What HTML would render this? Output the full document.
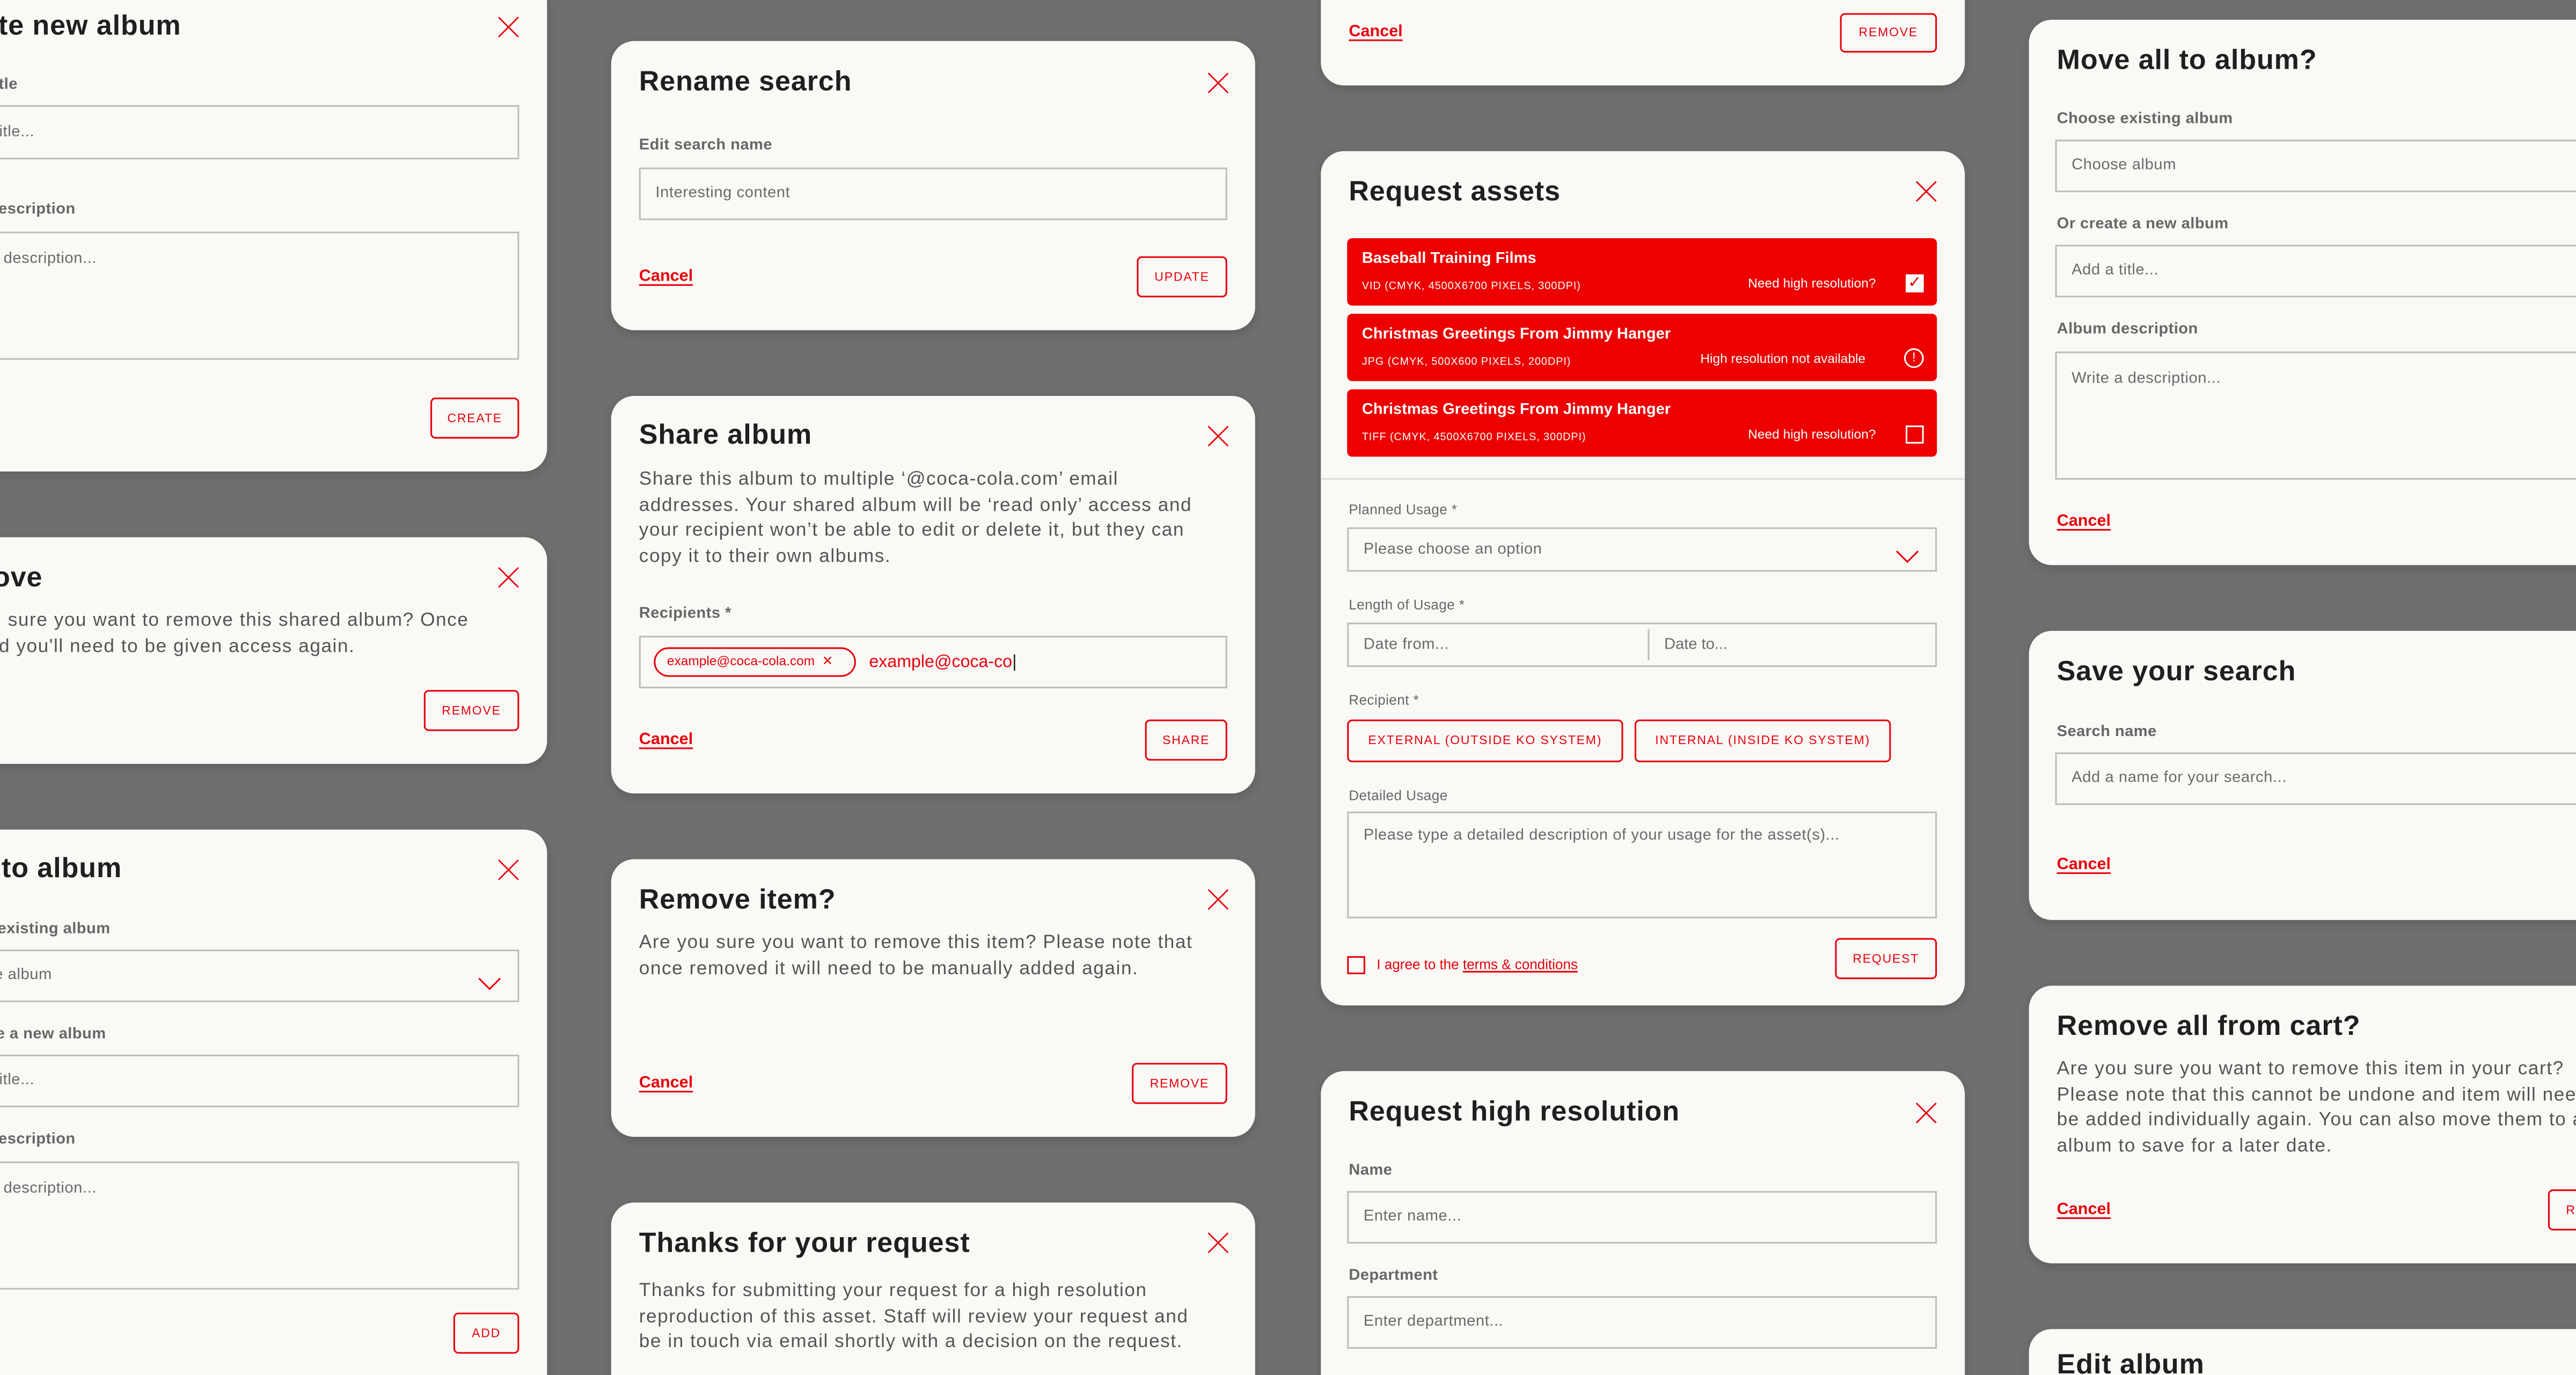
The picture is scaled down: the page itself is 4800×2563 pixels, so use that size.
<!DOCTYPE html>
<html><head><meta charset="utf-8">
<style>
html,body{margin:0;padding:0;}
body{width:4800px;height:2560px;overflow:hidden;background:#6f6f6f;}
#s{position:absolute;left:0;top:0;width:1568px;height:837px;transform:scale(3.0612,3.0622);transform-origin:0 0;font-family:"Liberation Sans",sans-serif;overflow:hidden;background:#6f6f6f;}
#s div{position:absolute;box-sizing:border-box;white-space:nowrap;}
.c{background:#faf9f6;border-radius:14px;box-shadow:0 2px 6px rgba(0,0,0,.15);}
.t{font-weight:700;font-size:17px;line-height:20px;color:#1f1f1f;letter-spacing:.3px;}
.l{font-weight:700;font-size:9.5px;line-height:12px;color:#666;letter-spacing:.15px;}
.i{border:1px solid #bdbdbd;font-size:9.5px;color:#6a6a6a;padding-left:9px;background:#faf9f6;letter-spacing:.2px;}
.b{border:1px solid #e8000b;border-radius:3px;color:#e8000b;font-size:7.5px;letter-spacing:.6px;text-align:center;}
.k{font-weight:700;font-size:10px;line-height:14px;color:#e8000b;text-decoration:underline;text-underline-offset:2px;}
.p{font-size:11.5px;line-height:15.6px;color:#555;letter-spacing:.5px;}
.r{background:#ec0000;border-radius:3px;color:#fff;}
</style></head><body><div id="s">

<!-- COLUMN 1 -->
<div class="c" style="left:-59px;top:-12px;width:392px;height:299px"></div>
<div class="t" style="left:-40px;top:6px">Create new album</div>
<div style="left:303px;top:10px"><svg width="13" height="13"><path d="M0.5 0.5L12.5 12.5M12.5 0.5L0.5 12.5" stroke="#e8000b" stroke-width="0.9"/></svg></div>
<div class="l" style="left:-40px;top:46px">Album title</div>
<div class="i" style="left:-42px;top:64px;width:358px;height:33px;line-height:31px">Add a title...</div>
<div class="l" style="left:-40px;top:122px">Album description</div>
<div class="i" style="left:-42px;top:141px;width:358px;height:78px;padding-top:10px">Write a description...</div>
<div class="b" style="left:262px;top:242px;width:54px;height:25px;line-height:23px">CREATE</div>

<div class="c" style="left:-59px;top:327px;width:392px;height:138px"></div>
<div class="t" style="left:-42px;top:342px">Remove</div>
<div style="left:303px;top:345px"><svg width="13" height="13"><path d="M0.5 0.5L12.5 12.5M12.5 0.5L0.5 12.5" stroke="#e8000b" stroke-width="0.9"/></svg></div>
<div class="p" style="left:-42px;top:371px">Are you sure you want to remove this shared album? Once<br>removed you'll need to be given access again.</div>
<div class="b" style="left:258px;top:420px;width:58px;height:25px;line-height:23px">REMOVE</div>

<div class="c" style="left:-59px;top:505px;width:392px;height:345px"></div>
<div class="t" style="left:-38px;top:519px">Add to album</div>
<div style="left:303px;top:523px"><svg width="13" height="13"><path d="M0.5 0.5L12.5 12.5M12.5 0.5L0.5 12.5" stroke="#e8000b" stroke-width="0.9"/></svg></div>
<div class="l" style="left:-40px;top:560px">Choose existing album</div>
<div class="i" style="left:-42px;top:578px;width:358px;height:32px;line-height:30px">Choose album</div>
<div style="left:291px;top:590px"><svg width="14" height="8"><path d="M0.5 0.5L7 7L13.5 0.5" stroke="#e8000b" stroke-width="1" fill="none"/></svg></div>
<div class="l" style="left:-40px;top:624px">Or create a new album</div>
<div class="i" style="left:-42px;top:642px;width:358px;height:32px;line-height:30px">Add a title...</div>
<div class="l" style="left:-40px;top:688px">Album description</div>
<div class="i" style="left:-42px;top:707px;width:358px;height:78px;padding-top:10px">Write a description...</div>
<div class="b" style="left:276px;top:799px;width:40px;height:25px;line-height:23px">ADD</div>

<!-- COLUMN 2 -->
<div class="c" style="left:372px;top:25px;width:392px;height:176px"></div>
<div class="t" style="left:389px;top:40px">Rename search</div>
<div style="left:735px;top:44px"><svg width="13" height="13"><path d="M0.5 0.5L12.5 12.5M12.5 0.5L0.5 12.5" stroke="#e8000b" stroke-width="0.9"/></svg></div>
<div class="l" style="left:389px;top:83px">Edit search name</div>
<div class="i" style="left:389px;top:102px;width:358px;height:32px;line-height:30px">Interesting content</div>
<div class="k" style="left:389px;top:162px">Cancel</div>
<div class="b" style="left:692px;top:156px;width:55px;height:25px;line-height:23px">UPDATE</div>

<div class="c" style="left:372px;top:241px;width:392px;height:242px"></div>
<div class="t" style="left:389px;top:255px">Share album</div>
<div style="left:735px;top:259px"><svg width="13" height="13"><path d="M0.5 0.5L12.5 12.5M12.5 0.5L0.5 12.5" stroke="#e8000b" stroke-width="0.9"/></svg></div>
<div class="p" style="left:389px;top:285px">Share this album to multiple ‘@coca-cola.com’ email<br>addresses. Your shared album will be ‘read only’ access and<br>your recipient won’t be able to edit or delete it, but they can<br>copy it to their own albums.</div>
<div class="l" style="left:389px;top:368px">Recipients *</div>
<div class="i" style="left:389px;top:387px;width:358px;height:32px"></div>
<div style="left:398px;top:394px;width:123px;height:18px;border:1px solid #e8000b;border-radius:9px;color:#e8000b;font-size:8px;line-height:16px;padding-left:7px">example@coca-cola.com &nbsp;✕</div>
<div style="left:529px;top:395px;font-size:10.5px;line-height:16px;color:#e8000b">example@coca-co<span style="color:#222">|</span></div>
<div class="k" style="left:389px;top:444px">Cancel</div>
<div class="b" style="left:697px;top:438px;width:50px;height:25px;line-height:23px">SHARE</div>

<div class="c" style="left:372px;top:523px;width:392px;height:169px"></div>
<div class="t" style="left:389px;top:538px">Remove item?</div>
<div style="left:735px;top:541px"><svg width="13" height="13"><path d="M0.5 0.5L12.5 12.5M12.5 0.5L0.5 12.5" stroke="#e8000b" stroke-width="0.9"/></svg></div>
<div class="p" style="left:389px;top:567px">Are you sure you want to remove this item? Please note that<br>once removed it will need to be manually added again.</div>
<div class="k" style="left:389px;top:653px">Cancel</div>
<div class="b" style="left:689px;top:647px;width:58px;height:25px;line-height:23px">REMOVE</div>

<div class="c" style="left:372px;top:732px;width:392px;height:130px"></div>
<div class="t" style="left:389px;top:747px">Thanks for your request</div>
<div style="left:735px;top:750px"><svg width="13" height="13"><path d="M0.5 0.5L12.5 12.5M12.5 0.5L0.5 12.5" stroke="#e8000b" stroke-width="0.9"/></svg></div>
<div class="p" style="left:389px;top:779px">Thanks for submitting your request for a high resolution<br>reproduction of this asset. Staff will review your request and<br>be in touch via email shortly with a decision on the request.</div>

<!-- COLUMN 3 -->
<div class="c" style="left:804px;top:-20px;width:392px;height:72px"></div>
<div class="k" style="left:821px;top:13px">Cancel</div>
<div class="b" style="left:1120px;top:8px;width:59px;height:24px;line-height:22px">REMOVE</div>

<div class="c" style="left:804px;top:92px;width:392px;height:520px"></div>
<div class="t" style="left:821px;top:107px">Request assets</div>
<div style="left:1166px;top:110px"><svg width="13" height="13"><path d="M0.5 0.5L12.5 12.5M12.5 0.5L0.5 12.5" stroke="#e8000b" stroke-width="0.9"/></svg></div>

<div class="r" style="left:820px;top:145px;width:359px;height:41px"></div>
<div style="left:829px;top:152px;font-weight:700;font-size:9.5px;line-height:12px;color:#fff">Baseball Training Films</div>
<div style="left:829px;top:170px;font-size:6.5px;line-height:9px;color:#fff;letter-spacing:.3px">VID (CMYK, 4500X6700 PIXELS, 300DPI)</div>
<div style="left:1064px;top:168px;font-size:8px;line-height:10px;color:#fff">Need high resolution?</div>
<div style="left:1160px;top:167px;width:11px;height:11px;background:#fff;color:#e8000b;font-size:10px;line-height:11px;text-align:center">✓</div>

<div class="r" style="left:820px;top:191px;width:359px;height:41px"></div>
<div style="left:829px;top:198px;font-weight:700;font-size:9.5px;line-height:12px;color:#fff">Christmas Greetings From Jimmy Hanger</div>
<div style="left:829px;top:216px;font-size:6.5px;line-height:9px;color:#fff;letter-spacing:.3px">JPG (CMYK, 500X600 PIXELS, 200DPI)</div>
<div style="left:1035px;top:214px;font-size:8px;line-height:10px;color:#fff">High resolution not available</div>
<div style="left:1159px;top:212px;width:12px;height:12px;border:1px solid #fff;border-radius:50%;color:#fff;font-size:8px;line-height:10px;text-align:center">!</div>

<div class="r" style="left:820px;top:237px;width:359px;height:41px"></div>
<div style="left:829px;top:244px;font-weight:700;font-size:9.5px;line-height:12px;color:#fff">Christmas Greetings From Jimmy Hanger</div>
<div style="left:829px;top:262px;font-size:6.5px;line-height:9px;color:#fff;letter-spacing:.3px">TIFF (CMYK, 4500X6700 PIXELS, 300DPI)</div>
<div style="left:1064px;top:260px;font-size:8px;line-height:10px;color:#fff">Need high resolution?</div>
<div style="left:1160px;top:259px;width:11px;height:11px;border:1px solid #fff"></div>

<div style="left:804px;top:291px;width:392px;height:1px;background:#ddd"></div>
<div class="l" style="left:821px;top:304px;font-weight:400;font-size:8.5px">Planned Usage *</div>
<div class="i" style="left:820px;top:321px;width:359px;height:27px;line-height:25px">Please choose an option</div>
<div style="left:1154px;top:330px"><svg width="14" height="8"><path d="M0.5 0.5L7 7L13.5 0.5" stroke="#e8000b" stroke-width="1" fill="none"/></svg></div>
<div class="l" style="left:821px;top:362px;font-weight:400;font-size:8.5px">Length of Usage *</div>
<div class="i" style="left:820px;top:379px;width:359px;height:27px;line-height:25px">Date from...</div>
<div style="left:1003px;top:383px;width:1px;height:19px;background:#bdbdbd"></div>
<div style="left:1013px;top:379px;font-size:9.5px;line-height:27px;color:#6a6a6a">Date to...</div>
<div class="l" style="left:821px;top:420px;font-weight:400;font-size:8.5px">Recipient *</div>
<div class="b" style="left:820px;top:438px;width:168px;height:26px;line-height:24px">EXTERNAL (OUTSIDE KO SYSTEM)</div>
<div class="b" style="left:995px;top:438px;width:156px;height:26px;line-height:24px">INTERNAL (INSIDE KO SYSTEM)</div>
<div class="l" style="left:821px;top:478px;font-weight:400;font-size:8.5px">Detailed Usage</div>
<div class="i" style="left:820px;top:494px;width:359px;height:65px;padding-top:8px">Please type a detailed description of your usage for the asset(s)...</div>
<div style="left:820px;top:582px;width:11px;height:11px;border:1px solid #e8000b"></div>
<div style="left:838px;top:582px;font-size:8.5px;line-height:11px;color:#e8000b">I agree to the <span style="text-decoration:underline">terms &amp; conditions</span></div>
<div class="b" style="left:1117px;top:571px;width:62px;height:25px;line-height:23px">REQUEST</div>

<div class="c" style="left:804px;top:652px;width:392px;height:210px"></div>
<div class="t" style="left:821px;top:667px">Request high resolution</div>
<div style="left:1166px;top:671px"><svg width="13" height="13"><path d="M0.5 0.5L12.5 12.5M12.5 0.5L0.5 12.5" stroke="#e8000b" stroke-width="0.9"/></svg></div>
<div class="l" style="left:821px;top:707px">Name</div>
<div class="i" style="left:820px;top:725px;width:359px;height:32px;line-height:30px">Enter name...</div>
<div class="l" style="left:821px;top:771px">Department</div>
<div class="i" style="left:820px;top:789px;width:359px;height:32px;line-height:30px">Enter department...</div>

<!-- COLUMN 4 -->
<div class="c" style="left:1235px;top:12px;width:392px;height:332px"></div>
<div class="t" style="left:1252px;top:27px">Move all to album?</div>
<div class="l" style="left:1252px;top:67px">Choose existing album</div>
<div class="i" style="left:1251px;top:85px;width:340px;height:32px;line-height:30px">Choose album</div>
<div class="l" style="left:1252px;top:131px">Or create a new album</div>
<div class="i" style="left:1251px;top:149px;width:340px;height:32px;line-height:30px">Add a title...</div>
<div class="l" style="left:1252px;top:195px">Album description</div>
<div class="i" style="left:1251px;top:214px;width:340px;height:78px;padding-top:10px">Write a description...</div>
<div class="k" style="left:1252px;top:311px">Cancel</div>

<div class="c" style="left:1235px;top:384px;width:392px;height:176px"></div>
<div class="t" style="left:1252px;top:399px">Save your search</div>
<div class="l" style="left:1252px;top:440px">Search name</div>
<div class="i" style="left:1251px;top:458px;width:340px;height:32px;line-height:30px">Add a name for your search...</div>
<div class="k" style="left:1252px;top:520px">Cancel</div>

<div class="c" style="left:1235px;top:600px;width:392px;height:169px"></div>
<div class="t" style="left:1252px;top:615px">Remove all from cart?</div>
<div class="p" style="left:1252px;top:644px">Are you sure you want to remove this item in your cart?<br>Please note that this cannot be undone and item will need to<br>be added individually again. You can also move them to an<br>album to save for a later date.</div>
<div class="k" style="left:1252px;top:730px">Cancel</div>
<div class="b" style="left:1551px;top:724px;width:58px;height:25px;line-height:23px">REMOVE</div>

<div class="c" style="left:1235px;top:809px;width:392px;height:60px"></div>
<div class="t" style="left:1252px;top:821px">Edit album</div>

</div></body></html>
